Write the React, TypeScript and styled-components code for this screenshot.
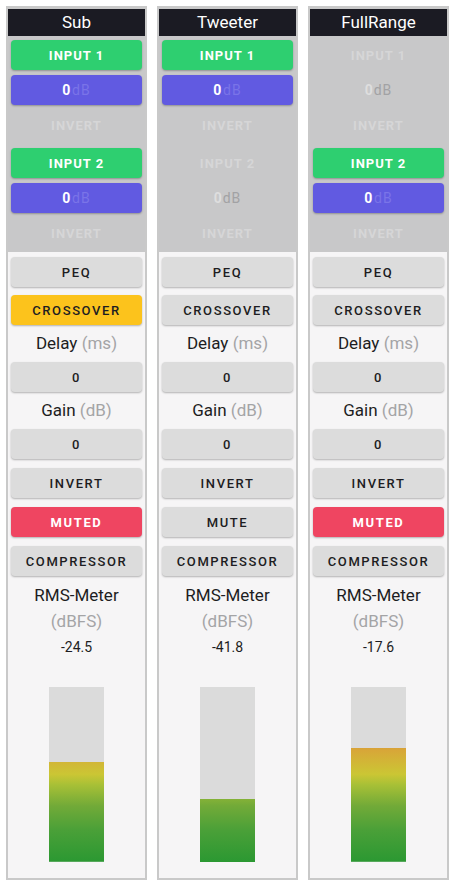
import * as React from "react";
import styled, { createGlobalStyle, css } from "styled-components";

const GlobalStyle = createGlobalStyle`
  html, body {
    margin: 0;
    padding: 0;
    background: #ffffff;
    font-family: Roboto, "Liberation Sans", sans-serif;
  }
`;

const colors = {
  border: "#c9c9c9",
  upper: "#c8c8c9",
  lower: "#f6f5f6",
  header: "#1b1b23",
  green: "#2ecf70",
  purple: "#615ae1",
  yellow: "#fcc31c",
  red: "#ef4561",
  grey: "#dcdcdc",
  text: "#1d1d22",
  muted: "#a4a4a6",
};

const METER_HEIGHT = 175;

interface InputState {
  active: boolean;
  gain: number;
}

interface ChannelState {
  name: string;
  inputs: InputState[];
  crossover: boolean;
  muted: boolean;
  delay: number;
  gain: number;
  rms: number;
  level: number;
}

const channels: ChannelState[] = [
  {
    name: "Sub",
    inputs: [{ active: true, gain: 0 }, { active: true, gain: 0 }],
    crossover: true,
    muted: true,
    delay: 0,
    gain: 0,
    rms: -24.5,
    level: 57,
  },
  {
    name: "Tweeter",
    inputs: [{ active: true, gain: 0 }, { active: false, gain: 0 }],
    crossover: false,
    muted: false,
    delay: 0,
    gain: 0,
    rms: -41.8,
    level: 36,
  },
  {
    name: "FullRange",
    inputs: [{ active: false, gain: 0 }, { active: true, gain: 0 }],
    crossover: false,
    muted: true,
    delay: 0,
    gain: 0,
    rms: -17.6,
    level: 65,
  },
];

const Page = styled.div`
  display: flex;
  gap: 10px;
  padding: 6px 0 0 6px;
`;

const Channel = styled.div`
  width: 141px;
  box-sizing: border-box;
  border: 2px solid ${colors.border};
  background: ${colors.lower};
  display: flex;
  flex-direction: column;
`;

const Upper = styled.div`
  background: ${colors.upper};
  padding-top: 1px;
`;

const Header = styled.div`
  height: 27px;
  background: ${colors.header};
  color: #ffffff;
  font-size: 17px;
  font-weight: 400;
  line-height: 27px;
  text-align: center;
`;

const InputGroup = styled.div`
  display: flex;
  flex-direction: column;
  gap: 5px;
  padding: 4px 3px;
`;

type Tone = "green" | "purple" | "yellow" | "red" | "grey" | "off";

const toneStyles: Record<Tone, ReturnType<typeof css>> = {
  green: css`
    background: ${colors.green};
    color: #ffffff;
    font-weight: 700;
    letter-spacing: 1px;
  `,
  purple: css`
    background: ${colors.purple};
    color: #ffffff;
    font-weight: 700;
  `,
  yellow: css`
    background: ${colors.yellow};
    color: ${colors.text};
  `,
  red: css`
    background: ${colors.red};
    color: #ffffff;
    font-weight: 700;
  `,
  grey: css`
    background: ${colors.grey};
    color: ${colors.text};
  `,
  off: css`
    background: transparent;
    box-shadow: none;
    color: #d6d6d7;
    font-weight: 700;
    letter-spacing: 1px;
  `,
};

const Button = styled.div<{ $tone: Tone }>`
  height: 30px;
  border-radius: 4px;
  display: flex;
  align-items: center;
  justify-content: center;
  font-size: 13px;
  font-weight: 500;
  letter-spacing: 1.6px;
  box-shadow: 0 1px 2px rgba(0, 0, 0, 0.28);
  ${({ $tone }) => toneStyles[$tone]}
`;

const GainValue = styled.span<{ $active: boolean }>`
  font-size: 14px;
  font-weight: 700;
  color: ${({ $active }) => ($active ? "#ffffff" : "#dedede")};
`;

const GainUnit = styled.span<{ $active: boolean }>`
  font-size: 14px;
  font-weight: 400;
  letter-spacing: 1px;
  color: ${({ $active }) => ($active ? "#7a74e8" : "#a2a2a4")};
`;

const Lower = styled.div`
  display: flex;
  flex-direction: column;
  gap: 8px;
  padding: 5px 3px 16px;
`;

const ToggleGroup = styled.div`
  display: flex;
  flex-direction: column;
  gap: 9px;
  margin-top: 1px;
`;

const Label = styled.div`
  height: 21px;
  line-height: 21px;
  text-align: center;
  font-size: 17px;
  color: ${colors.text};
`;

const Unit = styled.span`
  color: ${colors.muted};
`;

const MeterBlock = styled.div`
  display: flex;
  flex-direction: column;
  align-items: center;
`;

const MeterTitle = styled.div`
  line-height: 22px;
  font-size: 17px;
  color: ${colors.text};
`;

const MeterUnit = styled.div`
  line-height: 30px;
  font-size: 17px;
  color: ${colors.muted};
`;

const MeterValue = styled.div`
  line-height: 22px;
  font-size: 14px;
  color: ${colors.text};
`;

const MeterBar = styled.div`
  margin-top: 29px;
  width: 55px;
  height: ${METER_HEIGHT}px;
  background: #dbdbdb;
  display: flex;
  flex-direction: column;
  justify-content: flex-end;
`;

const MeterFill = styled.div`
  width: 100%;
  background: linear-gradient(
    to bottom,
    #e04a30 0%,
    #dc8c34 30%,
    #d8a638 36%,
    #cbc634 50%,
    #a8c036 56%,
    #72aa38 68%,
    #4aa038 82%,
    #2b9832 100%
  );
  background-size: 100% ${METER_HEIGHT}px;
  background-position: bottom;
`;

function InputSection({ input, index }: { input: InputState; index: number }) {
  return (
    <InputGroup>
      <Button $tone={input.active ? "green" : "off"}>INPUT {index + 1}</Button>
      <Button $tone={input.active ? "purple" : "off"}>
        <GainValue $active={input.active}>{input.gain}</GainValue>
        <GainUnit $active={input.active}>dB</GainUnit>
      </Button>
      <Button $tone="off">INVERT</Button>
    </InputGroup>
  );
}

function ChannelStrip({ channel }: { channel: ChannelState }) {
  return (
    <Channel>
      <Upper>
        <Header>{channel.name}</Header>
        {channel.inputs.map((input, i) => (
          <InputSection key={i} input={input} index={i} />
        ))}
      </Upper>
      <Lower>
        <Button $tone="grey">PEQ</Button>
        <Button $tone={channel.crossover ? "yellow" : "grey"}>CROSSOVER</Button>
        <Label>
          Delay <Unit>(ms)</Unit>
        </Label>
        <Button $tone="grey">{channel.delay}</Button>
        <Label>
          Gain <Unit>(dB)</Unit>
        </Label>
        <Button $tone="grey">{channel.gain}</Button>
        <ToggleGroup>
          <Button $tone="grey">INVERT</Button>
          <Button $tone={channel.muted ? "red" : "grey"}>
            {channel.muted ? "MUTED" : "MUTE"}
          </Button>
          <Button $tone="grey">COMPRESSOR</Button>
        </ToggleGroup>
        <MeterBlock>
          <MeterTitle>RMS-Meter</MeterTitle>
          <MeterUnit>(dBFS)</MeterUnit>
          <MeterValue>{channel.rms.toFixed(1)}</MeterValue>
          <MeterBar>
            <MeterFill style={{ height: `${channel.level}%` }} />
          </MeterBar>
        </MeterBlock>
      </Lower>
    </Channel>
  );
}

export default function App() {
  return (
    <>
      <GlobalStyle />
      <Page>
        {channels.map((c) => (
          <ChannelStrip key={c.name} channel={c} />
        ))}
      </Page>
    </>
  );
}
